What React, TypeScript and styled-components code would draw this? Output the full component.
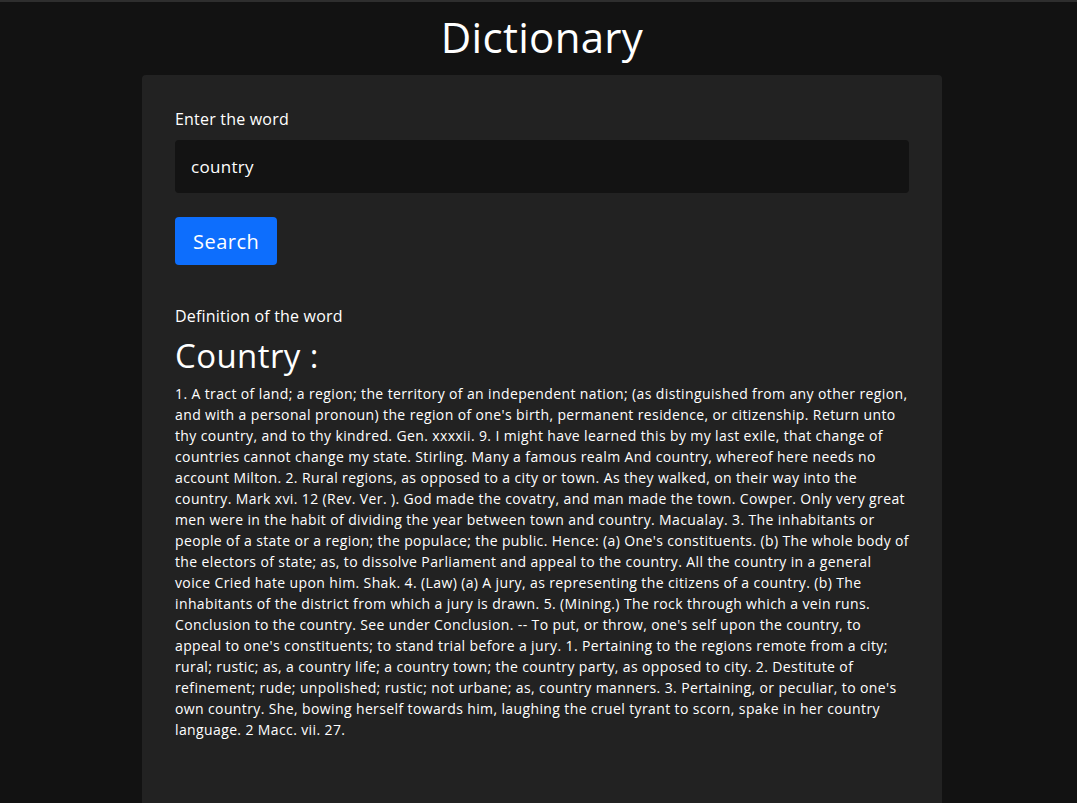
import React, { useState } from 'react'
import styled, { createGlobalStyle } from 'styled-components'

const GlobalStyle = createGlobalStyle`
  html, body {
    margin: 0;
    padding: 0;
    background: #121212;
    color: #ffffff;
    font-family: 'Open Sans', 'Liberation Sans', sans-serif;
  }
  * {
    box-sizing: border-box;
  }
`

const Page = styled.div`
  min-height: 803px;
  border-top: 2px solid #2e2e2e;
  padding-left: 7px;
  display: flex;
  flex-direction: column;
  align-items: center;
`

const Title = styled.h1`
  margin: 7px 0 0;
  height: 66px;
  font-size: 42px;
  font-weight: 400;
  letter-spacing: 0.3px;
  line-height: 56px;
`

const Card = styled.main`
  width: 800px;
  flex: 1;
  background: #222222;
  border-radius: 4px 4px 0 0;
  padding: 32px 33px 40px;
`

const Label = styled.div`
  font-size: 16px;
  line-height: 24px;
  letter-spacing: 0.2px;
`

const Input = styled.input`
  display: block;
  width: 100%;
  height: 53px;
  margin-top: 9px;
  border: none;
  border-radius: 4px;
  background: #131313;
  color: #ffffff;
  font-family: inherit;
  font-size: 17px;
  letter-spacing: 0.3px;
  padding: 0 16px;
  outline: none;
`

const Button = styled.button`
  margin-top: 24px;
  height: 48px;
  padding: 0 18px;
  border: none;
  border-radius: 4px;
  background: #0d6efd;
  color: #ffffff;
  font-family: inherit;
  font-size: 20px;
  letter-spacing: 0.5px;
  cursor: pointer;
`

const Result = styled.section`
  margin-top: 39px;
`

const Word = styled.h2`
  margin: 7px 0 6px;
  font-size: 33px;
  font-weight: 400;
  letter-spacing: 0.4px;
  line-height: 42px;
`

const Definition = styled.p`
  margin: 0;
  font-size: 14px;
  line-height: 21px;
  letter-spacing: 0.38px;
`

const definition =
  "1. A tract of land; a region; the territory of an independent nation; (as distinguished from any other region, and with a personal pronoun) the region of one's birth, permanent residence, or citizenship. Return unto thy country, and to thy kindred. Gen. xxxxii. 9. I might have learned this by my last exile, that change of countries cannot change my state. Stirling. Many a famous realm And country, whereof here needs no account Milton. 2. Rural regions, as opposed to a city or town. As they walked, on their way into the country. Mark xvi. 12 (Rev. Ver. ). God made the covatry, and man made the town. Cowper. Only very great men were in the habit of dividing the year between town and country. Macualay. 3. The inhabitants or people of a state or a region; the populace; the public. Hence: (a) One's constituents. (b) The whole body of the electors of state; as, to dissolve Parliament and appeal to the country. All the country in a general voice Cried hate upon him. Shak. 4. (Law) (a) A jury, as representing the citizens of a country. (b) The inhabitants of the district from which a jury is drawn. 5. (Mining.) The rock through which a vein runs. Conclusion to the country. See under Conclusion. -- To put, or throw, one's self upon the country, to appeal to one's constituents; to stand trial before a jury. 1. Pertaining to the regions remote from a city; rural; rustic; as, a country life; a country town; the country party, as opposed to city. 2. Destitute of refinement; rude; unpolished; rustic; not urbane; as, country manners. 3. Pertaining, or peculiar, to one's own country. She, bowing herself towards him, laughing the cruel tyrant to scorn, spake in her country language. 2 Macc. vii. 27."

export default function App() {
  const [word, setWord] = useState('country')
  return (
    <>
      <GlobalStyle />
      <Page>
        <Title>Dictionary</Title>
        <Card>
          <Label>Enter the word</Label>
          <Input value={word} onChange={e => setWord(e.target.value)} />
          <Button>Search</Button>
          <Result>
            <Label>Definition of the word</Label>
            <Word>Country :</Word>
            <Definition>{definition}</Definition>
          </Result>
        </Card>
      </Page>
    </>
  )
}
